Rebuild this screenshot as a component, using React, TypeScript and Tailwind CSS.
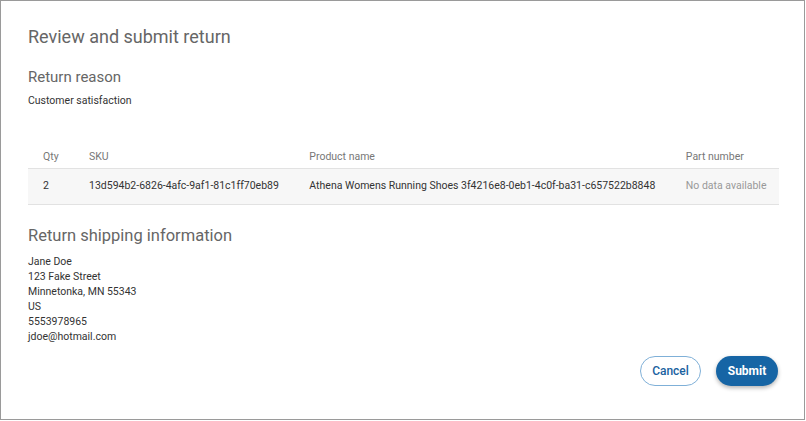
import React from "react";

const font = { fontFamily: "Roboto, 'Noto Sans', sans-serif" };

export default function App() {
  const cols = ["w-[46px]", "w-[220px]", "w-[376px]", "w-[108px]"];
  return (
    <div
      className="w-[805px] h-[420px] border border-[#9a9a9a] bg-white pl-[27px] pr-[26px] pt-[25px] text-[#333]"
      style={font}
    >
      <h1 className="text-[18px] leading-[22px] text-[#666]">Review and submit return</h1>
      <h2 className="mt-[19px] text-[15px] leading-[20px] text-[#666]">Return reason</h2>
      <p className="mt-[6px] text-[10.5px] leading-[15px] text-[#333]">Customer satisfaction</p>

      <table className="mt-[37px] w-[751px] table-fixed border-collapse text-[10.5px]">
        <colgroup>
          {cols.map((c, i) => (
            <col key={i} className={c} />
          ))}
        </colgroup>
        <thead>
          <tr className="h-[23px] border-b border-[#e2e2e2]">
            <th className="pl-[15px] pt-[2px] text-left font-normal text-[#777]">Qty</th>
            <th className="pl-[15px] pt-[2px] text-left font-normal text-[#777]">SKU</th>
            <th className="pl-[15px] pt-[2px] text-left font-normal text-[#777]">Product name</th>
            <th className="pl-[15px] pt-[2px] text-left font-normal text-[#777]">Part number</th>
          </tr>
        </thead>
        <tbody>
          <tr className="h-[36px] border-b border-[#e2e2e2] bg-[#f7f7f7]">
            <td className="pl-[15px] text-[#333]">2</td>
            <td className="pl-[15px] text-[#333] whitespace-nowrap">13d594b2-6826-4afc-9af1-81c1ff70eb89</td>
            <td className="pl-[15px] text-[#333] whitespace-nowrap">
              Athena Womens Running Shoes 3f4216e8-0eb1-4c0f-ba31-c657522b8848
            </td>
            <td className="pl-[15px] text-[#999] whitespace-nowrap">No data available</td>
          </tr>
        </tbody>
      </table>

      <h2 className="mt-[21px] text-[16.5px] leading-[20px] text-[#666]">Return shipping information</h2>
      <div className="mt-[8px] text-[10.5px] leading-[15px] text-[#333]">
        <div>Jane Doe</div>
        <div>123 Fake Street</div>
        <div>Minnetonka, MN 55343</div>
        <div>US</div>
        <div>5553978965</div>
        <div>jdoe@hotmail.com</div>
      </div>

      <div className="mt-[12px] flex justify-end gap-[15px]">
        <button className="h-[30px] w-[61px] rounded-full border border-[#7fb0d8] bg-white text-[12px] font-medium text-[#1a62a0]">
          Cancel
        </button>
        <button className="h-[30px] w-[62px] rounded-full bg-[#1665a5] text-[12px] font-bold text-white shadow-[0_2px_4px_rgba(0,0,0,0.3)]">
          Submit
        </button>
      </div>
    </div>
  );
}
